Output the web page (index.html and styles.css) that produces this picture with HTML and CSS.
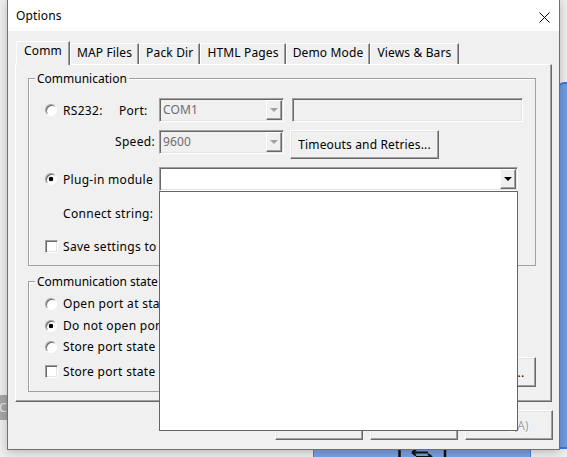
FILE: index.html
```html
<!DOCTYPE html>
<html lang="en">
<head>
    <meta charset="UTF-8">
    <meta name="viewport" content="width=device-width, initial-scale=1.0">
    <title>Options</title>
    <link rel="stylesheet" href="styles.css">
</head>
<body>
    <div class="desktop">
        <!-- windows lying behind the dialog -->
        <div class="back-status">Co</div>
        <div class="back-pane"></div>
        <div class="back-toolbar">
            <svg class="swap-icon" width="50" height="10" viewBox="0 0 50 10">
                <path d="M1.5 0V10M47 0V10" stroke="#111" stroke-width="2.5" fill="none"/>
                <path d="M14 3.5H30M14 3.5l4-3M14 3.5l4 3" stroke="#111" stroke-width="2" fill="none"/>
                <path d="M18 8H34M34 8l-4-3" stroke="#111" stroke-width="2" fill="none"/>
            </svg>
        </div>

        <div class="dialog">
            <div class="titlebar">
                <span class="title">Options</span>
                <svg class="close-icon" width="11" height="11" viewBox="0 0 11 11">
                    <path d="M0.5 0.5L10.5 10.5M10.5 0.5L0.5 10.5" stroke="#000" stroke-width="1" fill="none"/>
                </svg>
            </div>

            <div class="client">
                <div class="tabs">
                    <div class="tab active">Comm</div>
                    <div class="tab">MAP Files</div>
                    <div class="tab">Pack Dir</div>
                    <div class="tab">HTML Pages</div>
                    <div class="tab">Demo Mode</div>
                    <div class="tab">Views &amp; Bars</div>
                </div>

                <div class="tab-page">
                    <fieldset class="group group-comm">
                        <legend>Communication</legend>
                        <div class="row row-rs232">
                            <span class="radio"></span>
                            <span class="lbl lbl-rs232">RS232:</span>
                            <span class="lbl lbl-port">Port:</span>
                            <div class="combo combo-port disabled">
                                <span class="combo-text">COM1</span>
                                <span class="combo-btn"><i class="arrow"></i></span>
                            </div>
                            <div class="textbox textbox-port disabled"></div>
                        </div>
                        <div class="row row-speed">
                            <span class="lbl lbl-speed">Speed:</span>
                            <div class="combo combo-speed disabled">
                                <span class="combo-text">9600</span>
                                <span class="combo-btn"><i class="arrow"></i></span>
                            </div>
                            <button class="btn btn-timeouts">Timeouts and Retries...</button>
                        </div>
                        <div class="row row-plugin">
                            <span class="radio checked"></span>
                            <span class="lbl lbl-plugin">Plug-in module</span>
                            <div class="combo combo-plugin">
                                <span class="combo-text"></span>
                                <span class="combo-btn"><i class="arrow"></i></span>
                                <div class="dropdown-list"></div>
                            </div>
                        </div>
                        <div class="row row-connect">
                            <span class="lbl lbl-connect">Connect string:</span>
                            <div class="textbox textbox-connect"></div>
                        </div>
                        <div class="row row-save">
                            <span class="check"></span>
                            <span class="lbl">Save settings to registry</span>
                        </div>
                    </fieldset>

                    <div class="state-row">
                        <fieldset class="group group-state">
                            <legend>Communication state</legend>
                            <div class="row row-open">
                                <span class="radio"></span>
                                <span class="lbl">Open port at startup</span>
                            </div>
                            <div class="row row-noopen">
                                <span class="radio checked"></span>
                                <span class="lbl">Do not open port</span>
                            </div>
                            <div class="row row-store">
                                <span class="radio"></span>
                                <span class="lbl">Store port state</span>
                            </div>
                            <div class="row row-exit">
                                <span class="check"></span>
                                <span class="lbl">Store port state on exit</span>
                            </div>
                        </fieldset>
                        <button class="btn btn-state">State File...</button>
                    </div>
                </div>

                <div class="buttons">
                    <button class="btn">确定</button>
                    <button class="btn">取消</button>
                    <button class="btn btn-disabled">应用(A)</button>
                </div>
            </div>
        </div>
    </div>
</body>
</html>
```

FILE: styles.css
```css
* {
    box-sizing: border-box;
}
body {
    margin: 0;
    background-color: #f0f0f0;
    font-family: "Noto Sans", "Noto Sans CJK SC", sans-serif;
    font-size: 12px;
    letter-spacing: 0.15px;
    color: #000;
}
.desktop {
    position: relative;
    width: 567px;
    height: 457px;
    overflow: hidden;
}

/* things behind the dialog */
.back-status {
    position: absolute;
    left: 0;
    top: 395px;
    width: 7px;
    height: 25px;
    overflow: hidden;
    background-color: #a8a8a8;
    color: #e8e8e8;
    line-height: 25px;
    text-indent: -1px;
}
.back-pane {
    position: absolute;
    left: 558px;
    top: 82px;
    width: 20px;
    height: 367px;
    background-color: #6f9de6;
    border: 2px solid #3d77d8;
    border-radius: 6px 0 0 0;
}
.back-toolbar {
    position: absolute;
    left: 313px;
    top: 447px;
    width: 218px;
    height: 20px;
    background-color: #79a3e6;
    border: 1px solid #4a7fd4;
}
.swap-icon {
    display: block;
    margin: 1px 0 0 84px;
}

/* dialog frame */
.dialog {
    position: absolute;
    left: 7px;
    top: -1px;
    width: 553px;
    height: 451px;
    display: flex;
    flex-direction: column;
    background-color: #f0f0f0;
    border: 1px solid #707070;
    box-shadow: 0 2px 10px rgba(0, 0, 0, 0.25);
}
.titlebar {
    height: 31px;
    flex-shrink: 0;
    display: flex;
    align-items: center;
    justify-content: space-between;
    padding: 0 9px 0 8px;
    background-color: #fff;
    line-height: 31px;
}
.close-icon {
    display: block;
    margin-top: 3px;
}
.client {
    flex: 1;
    display: flex;
    flex-direction: column;
    padding: 10px 7px 9px;
}

/* tabs */
.tabs {
    height: 23px;
    display: flex;
    align-items: flex-end;
    padding-left: 1px;
}
.tab {
    height: 21px;
    padding: 1px 6px 0;
    line-height: 16px;
    white-space: nowrap;
    background-color: #f0f0f0;
    border: 1px solid;
    border-color: #fff #696969 transparent #fff;
    border-bottom: none;
    box-shadow: inset -1px 0 0 #a0a0a0;
}
.tab.active {
    position: relative;
    z-index: 1;
    height: 24px;
    margin-bottom: -1px;
    padding: 1px 7px 0;
}
.tab-page {
    height: 338px;
    flex-shrink: 0;
    padding: 5px 15px 9px 12px;
    border: 1px solid;
    border-color: #fff #696969 #696969 #fff;
    box-shadow: inset -1px -1px 0 #a0a0a0;
}

/* group boxes */
.group {
    margin: 0;
    padding: 0;
    min-width: 0;
    border: 1px solid #a0a0a0;
    box-shadow: inset 1px 1px 0 #fff;
}
.group legend {
    margin-left: 6px;
    padding: 0 2px;
    line-height: 17px;
    letter-spacing: 0;
    background-color: #f0f0f0;
}
.group-comm {
    padding: 11px 0 12px;
}
.row {
    display: flex;
    align-items: center;
    white-space: nowrap;
}
.lbl {
    letter-spacing: 0.3px;
}
.row-rs232 {
    height: 24px;
}
.row-speed {
    height: 29px;
    margin-top: 8px;
    align-items: flex-start;
}
.row-speed .lbl-speed {
    line-height: 24px;
}
.row-plugin {
    height: 24px;
    margin-top: 8px;
}
.row-connect {
    height: 24px;
    margin-top: 10px;
}
.row-save {
    height: 13px;
    margin-top: 15px;
}
.lbl-rs232 {
    width: 56px;
}
.lbl-port {
    width: 40px;
}
.lbl-speed {
    width: 44px;
    margin-left: 86px;
}
.lbl-plugin {
    width: 96px;
}
.lbl-connect {
    width: 96px;
    margin-left: 34px;
}

/* radio and check boxes */
.radio {
    width: 12px;
    height: 12px;
    flex-shrink: 0;
    margin: 0 6px 0 16px;
    border-radius: 50%;
    border: 1px solid;
    border-color: #a0a0a0 #fff #fff #a0a0a0;
    background-color: #fff;
    box-shadow: inset 1px 1px 0 #696969;
}
.radio.checked {
    background: radial-gradient(circle, #000 0 2px, #fff 2.6px);
}
.check {
    width: 13px;
    height: 13px;
    flex-shrink: 0;
    margin: 0 5px 0 16px;
    border: 1px solid;
    border-color: #a0a0a0 #fff #fff #a0a0a0;
    background-color: #fff;
    box-shadow: inset 1px 1px 0 #696969, inset -1px -1px 0 #e3e3e3;
}

/* combo boxes and edit fields */
.combo, .textbox {
    height: 24px;
    padding: 1px;
    background-color: #fff;
    border: 1px solid;
    border-color: #a0a0a0 #fff #fff #a0a0a0;
    box-shadow: inset 1px 1px 0 #696969, inset -1px -1px 0 #e3e3e3;
}
.combo {
    display: flex;
}
.combo.disabled, .textbox.disabled {
    background-color: #f0f0f0;
    color: #6d6d6d;
}
.combo-port, .combo-speed {
    width: 125px;
}
.combo-text {
    flex: 1;
    padding-left: 2px;
    line-height: 20px;
}
.combo-btn {
    width: 16px;
    display: flex;
    align-items: center;
    justify-content: center;
    background-color: #f0f0f0;
    border: 1px solid;
    border-color: #fff #696969 #696969 #fff;
    box-shadow: inset -1px -1px 0 #a0a0a0;
}
.arrow {
    width: 0;
    height: 0;
    border-left: 4px solid transparent;
    border-right: 4px solid transparent;
    border-top: 4px solid #000;
}
.disabled .arrow {
    border-top-color: #a0a0a0;
}
.combo-plugin {
    position: relative;
    width: 359px;
}
.dropdown-list {
    position: absolute;
    left: -1px;
    top: calc(100% + 1px);
    z-index: 10;
    width: 359px;
    height: 240px;
    background-color: #fff;
    border: 1px solid #646464;
}
.textbox-port {
    width: 231px;
    margin-left: 8px;
}
.textbox-connect {
    width: 359px;
}

/* push buttons */
.btn {
    font: inherit;
    letter-spacing: inherit;
    color: #000;
    padding: 0;
    background-color: #f0f0f0;
    border: 1px solid;
    border-color: #fff #696969 #696969 #fff;
    box-shadow: inset -1px -1px 0 #a0a0a0, inset 1px 1px 0 #e3e3e3;
    white-space: nowrap;
}
.btn-timeouts {
    width: 149px;
    height: 29px;
    margin-left: 6px;
}
.btn-disabled {
    color: #a0a0a0;
    text-shadow: 1px 1px 0 #fff;
}

/* lower group */
.state-row {
    display: flex;
    margin-top: 7px;
}
.group-state {
    width: 412px;
    padding: 7px 0 13px;
}
.row-open, .row-noopen, .row-store, .row-exit {
    height: 13px;
}
.row-noopen {
    margin-top: 9px;
}
.row-store {
    margin-top: 8px;
}
.row-exit {
    margin-top: 12px;
}
.btn-state {
    width: 86px;
    height: 30px;
    margin-left: auto;
    margin-bottom: 5px;
    align-self: flex-end;
}

.buttons {
    display: flex;
    justify-content: flex-end;
    gap: 7px;
    margin: 8px -1px 0 0;
}
.buttons .btn {
    width: 88px;
    height: 30px;
}
```
